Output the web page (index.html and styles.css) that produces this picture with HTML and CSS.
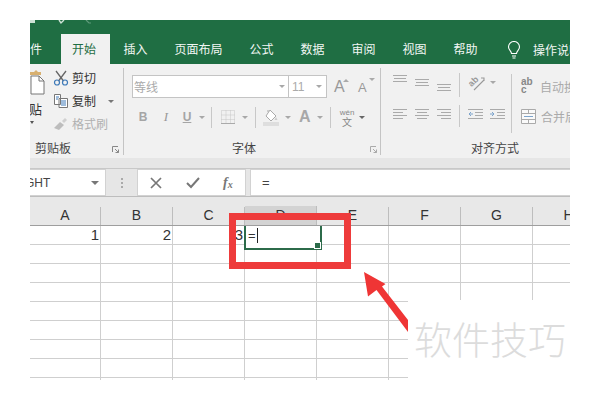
FILE: index.html
```html
<!DOCTYPE html>
<html lang="zh">
<head>
<meta charset="utf-8">
<title>Excel</title>
<link rel="stylesheet" href="styles.css">
</head>
<body>
<div class="page">
  <div class="app">
    <div class="titlebar">
      <svg class="qa" width="100" height="5" viewBox="0 0 100 5"><path d="M0 0h5v3H0z" fill="#cfe3d7"/><path d="M29 0l2 3 3-3" fill="none" stroke="#cfe3d7" stroke-width="1.4"/><path d="M56 0l3 3h2" fill="none" stroke="#5f9a7a" stroke-width="1.2"/></svg>
    </div>
    <div class="tabs">
      <span class="tab tab-file">文件</span>
      <span class="tab tab-active">开始</span>
      <span class="tab">插入</span>
      <span class="tab">页面布局</span>
      <span class="tab">公式</span>
      <span class="tab">数据</span>
      <span class="tab">审阅</span>
      <span class="tab">视图</span>
      <span class="tab">帮助</span>
      <svg class="bulb" width="14" height="18" viewBox="0 0 14 18"><path d="M4.500 12.500C4.500 10 1.500 9 1.500 6a5.500 5.500 0 0 1 11 0c0 3-3 4-3 6.500zM5 15h4M5.500 17h3" fill="none" stroke="#fff" stroke-width="1.100"/></svg>
      <span class="tell">操作说明搜索</span>
    </div>
    <div class="ribbon">
      <section class="group group-clip">
        <div class="group-body clip-body">
          <div class="paste">
            <svg width="15" height="30" viewBox="0 0 15 30"><path d="M0 4h4l2-2 2 2h3v3H0z" fill="#d8b070"/><path d="M1 8h8l5 5v13H1z" fill="#fff" stroke="#777"/><path d="M9 8v5h5" fill="none" stroke="#777"/></svg>
            <span class="paste-label">贴</span>
            <i class="caret caret-paste"></i>
          </div>
          <div class="clip-tools">
            <div class="tool">
              <svg width="16" height="16" viewBox="0 0 16 16"><path d="M3 1l7.500 10M13 1L5.500 11" fill="none" stroke="#666" stroke-width="1.300"/><circle cx="4" cy="12.500" r="2.500" fill="none" stroke="#3d79b8" stroke-width="1.200"/><circle cx="12" cy="12.500" r="2.500" fill="none" stroke="#3d79b8" stroke-width="1.200"/></svg>
              <span>剪切</span>
            </div>
            <div class="tool">
              <svg width="16" height="16" viewBox="0 0 16 16"><path d="M1.500 1.500h6v10h-6zM6 5.500h8.500v9H6z" fill="#fff" stroke="#777"/><path d="M8 8h5M8 10h5M8 12h5M3 4h3M3 6h2" stroke="#3d79b8"/></svg>
              <span>复制</span>
              <i class="caret caret-copy"></i>
            </div>
            <div class="tool tool-off">
              <svg width="16" height="16" viewBox="0 0 16 16"><path d="M1 12l6-6 4 3-5 5z" fill="#bdbdbd"/><path d="M9 5l3-3 2 2-3 3z" fill="#d0d0d0"/></svg>
              <span>格式刷</span>
            </div>
          </div>
        </div>
        <div class="group-foot foot-clip">
          <span>剪贴板</span>
          <svg class="launch" width="7" height="7" viewBox="0 0 7 7"><path d="M.5 6V.5H6M3 3l3.500 3.500M6.500 3.500v3h-3" fill="none" stroke="#888"/></svg>
        </div>
      </section>

      <section class="group group-font">
        <div class="group-body">
          <div class="font-row1">
            <div class="combo combo-name"><span>等线</span><i class="caret"></i></div>
            <div class="combo combo-size"><span>11</span><i class="caret"></i></div>
            <span class="grow-a">A<i class="tick"></i></span>
            <span class="shrink-a">A<i class="tick"></i></span>
          </div>
          <div class="font-row2">
            <b class="fmt fmt-b">B</b>
            <i class="fmt fmt-i">I</i>
            <span class="fmt fmt-u">U</span>
            <i class="caret caret-u"></i>
            <i class="vsep vsep-a"></i>
            <svg class="borders" width="14" height="14" viewBox="0 0 14 14"><path d="M.5.500h13v13H.500zM.5 5h13M.5 9.500h13M5 .5v13M9.500.5v13" fill="none" stroke="#c6c6c6" stroke-dasharray="1 1"/><path d="M0 13.500h14" stroke="#aaa"/></svg>
            <i class="caret caret-b"></i>
            <i class="vsep vsep-b"></i>
            <svg class="fill" width="16" height="17" viewBox="0 0 16 17"><path d="M7 1l6 6-5 5-5-5z" fill="#fff" stroke="#aaa"/><path d="M5 3V1" stroke="#aaa"/><path d="M13 8l1.500 3-3 0z" fill="#ccc"/><path d="M0 13h16v4H0z" fill="#dedede"/></svg>
            <i class="caret caret-f"></i>
            <span class="fmt-a">A</span>
            <i class="caret caret-a"></i>
            <i class="vsep vsep-c"></i>
            <span class="wen"><span>wén</span><span>文</span></span>
            <i class="caret caret-w"></i>
          </div>
        </div>
        <div class="group-foot foot-font">
          <span>字体</span>
          <svg class="launch" width="7" height="7" viewBox="0 0 7 7"><path d="M.5 6V.5H6M3 3l3.500 3.500M6.500 3.500v3h-3" fill="none" stroke="#aaa"/></svg>
        </div>
      </section>

      <section class="group group-align">
        <div class="group-body align-body">
          <div class="align-grid">
            <div class="align-row">
              <svg width="14" height="20" viewBox="0 0 14 20"><path d="M0 2.500h14M1 5.500h12M0 8.500h14" stroke="#aaa"/></svg>
              <svg width="14" height="20" viewBox="0 0 14 20"><path d="M0 6.500h14M1 9.500h12M0 12.500h14" stroke="#aaa"/></svg>
              <svg width="14" height="20" viewBox="0 0 14 20"><path d="M0 11.500h14M1 14.500h12M0 17.500h14" stroke="#aaa"/></svg>
              <i class="vsep vsep-d"></i>
              <svg class="orient" width="17" height="18" viewBox="0 0 17 18"><text x="1" y="12" transform="rotate(-45 5 10)" class="orient-text">ab</text><path d="M6 17L16 7M13 5l3 0 0 3" fill="none" stroke="#999" stroke-width="1.100"/></svg>
              <i class="caret caret-o"></i>
            </div>
            <div class="align-row align-row2">
              <svg width="14" height="14" viewBox="0 0 14 14"><path d="M0 1.500h14M0 4.500h10M0 7.500h14M0 10.500h10" stroke="#aaa"/></svg>
              <svg width="14" height="14" viewBox="0 0 14 14"><path d="M0 1.500h14M2 4.500h10M0 7.500h14M2 10.500h10" stroke="#aaa"/></svg>
              <svg width="14" height="14" viewBox="0 0 14 14"><path d="M0 1.500h14M4 4.500h10M0 7.500h14M4 10.500h10" stroke="#aaa"/></svg>
              <i class="vsep vsep-e"></i>
              <svg class="ind1" width="15" height="14" viewBox="0 0 15 14"><path d="M0 1.500h15M7 4.500h8M7 7.500h8M0 10.500h15" stroke="#aaa"/><path d="M5 6H1M3 4L1 6l2 2" fill="none" stroke="#7da4cc"/></svg>
              <svg class="ind2" width="15" height="14" viewBox="0 0 15 14"><path d="M0 1.500h15M7 4.500h8M7 7.500h8M0 10.500h15" stroke="#aaa"/><path d="M0 6h4M2 4l2 2-2 2" fill="none" stroke="#7da4cc"/></svg>
            </div>
          </div>
          <i class="vsep vsep-f"></i>
          <div class="wrap-col">
            <div class="wrap-row">
              <span class="abc"><span>ab</span><span>c</span></span>
              <span>自动换行</span>
            </div>
            <div class="wrap-row">
              <svg width="15" height="15" viewBox="0 0 15 15"><path d="M.5.500h14v14H.500zM.5 4.500h14M.5 10.500h14M7.500.5v4M7.500 10.500v4" fill="#fafafa" stroke="#aaa"/><path d="M3 7.500h9" stroke="#7da4cc"/></svg>
              <span>合并后居中</span>
            </div>
          </div>
        </div>
        <div class="group-foot foot-align"><span>对齐方式</span></div>
      </section>
    </div>

    <div class="strip"></div>

    <div class="formula-bar">
      <div class="name-box"><span>GHT</span><i class="caret caret-name"></i></div>
      <div class="dots"></div>
      <div class="fn-box">
        <svg width="12" height="12" viewBox="0 0 12 12"><path d="M1 1l10 10M11 1L1 11" stroke="#777" stroke-width="1.700"/></svg>
        <svg width="14" height="12" viewBox="0 0 14 12"><path d="M1 6l4 4 8-9" fill="none" stroke="#777" stroke-width="2"/></svg>
        <span class="fx">f<sub>x</sub></span>
      </div>
      <div class="input-box">=</div>
    </div>

    <div class="col-heads">
      <span>A</span><span>B</span><span>C</span><span class="col-on">D</span><span>E</span><span>F</span><span>G</span><span>H</span>
    </div>
    <div class="cells">
      <div class="num">1</div><div class="num">2</div><div class="num">3</div>
      <div class="sel"><span class="sel-text">=</span><i class="cursor"></i></div>
      <div></div><div></div><div></div><div></div>
      <div></div><div></div><div></div><div></div><div></div><div></div><div></div><div></div>
      <div></div><div></div><div></div><div></div><div></div><div></div><div></div><div></div>
      <div></div><div></div><div></div><div></div><div></div><div></div><div></div><div></div>
      <div></div><div></div><div></div><div></div><div></div><div></div><div></div><div></div>
      <div></div><div></div><div></div><div></div><div></div><div></div><div></div><div></div>
      <div></div><div></div><div></div><div></div><div></div><div></div><div></div><div></div>
      <div></div><div></div><div></div><div></div><div></div><div></div><div></div><div></div>
      <div></div><div></div><div></div><div></div><div></div><div></div><div></div><div></div>
    </div>
  </div>

  <div class="mark-box"></div>
  <div class="red-frame"></div>
  <svg class="arrow" width="50" height="64" viewBox="0 0 50 64"><path d="M0 0L21.500 12 18 14.500 44 48V60L12.500 18 4 24.500z" fill="#ef3535"/></svg>
  <div class="watermark">软件技巧</div>
</div>
</body>
</html>
```

FILE: styles.css
```css
* { box-sizing: border-box; }
html, body { margin: 0; background: #fff; }
body { font-family: "Noto Sans CJK SC", "Liberation Sans", sans-serif; }
.page { position: relative; width: 600px; height: 400px; overflow: hidden; background: #fff; }
.app { width: 540px; height: 360px; margin: 20px 0 0 30px; overflow: hidden; display: flex; flex-direction: column; }
i { display: block; font-style: normal; }

.titlebar { height: 14px; background: #1f6e43; flex: none; }
.qa { display: block; }

.tabs { height: 30px; flex: none; display: flex; align-items: center; background: #1f6e43; color: #f2f7f4; font-size: 12px; white-space: nowrap; }
.tab { padding: 0 13.5px; height: 30px; line-height: 29px; flex: none; }
.tab-file { width: 43px; padding: 0; margin-left: -12px; }
.tab-active { width: 49px; padding: 0 0 0 11px; background: #f1f1f1; color: #1f6e43; }
.bulb { margin: 1px 0 0 16px; flex: none; }
.tell { margin-left: 12px; }

.ribbon { height: 94px; flex: none; display: flex; background: #f1f1f1; color: #555; font-size: 12px; }
.group { position: relative; display: flex; flex-direction: column; flex: none; }
.group-clip, .group-font { border-right: 1px solid transparent; }
.group-clip::after, .group-font::after { content: ""; position: absolute; right: -1px; top: 4px; bottom: 3px; width: 1px; background: #c4c4c4; }
.group-clip { width: 94px; }
.group-font { width: 257px; }
.group-align { width: 189px; }
.group-body { height: 73px; flex: none; }
.group-foot { height: 21px; flex: none; display: flex; align-items: center; color: #444; font-size: 12px; line-height: 16px; }

.caret { width: 0; height: 0; border-left: 3px solid transparent; border-right: 3px solid transparent; border-top: 3px solid #a8a8a8; flex: none; }

.clip-body { display: flex; }
.paste { width: 23px; padding-top: 4px; flex: none; overflow: hidden; }
.paste svg { display: block; }
.paste-label { display: block; font-size: 13px; line-height: 16px; margin: 3px 0 0 -2px; color: #333; width: 14px; overflow: hidden; text-align: right; }
.caret-paste { margin: 4px 0 0 0; border-top-color: #555; border-left-width: 2px; border-right-width: 2px; }
.clip-tools { padding-top: 6px; display: flex; flex-direction: column; gap: 7px; }
.tool { display: flex; align-items: center; gap: 3px; height: 16px; color: #333; line-height: 16px; font-size: 12px; }
.tool-off { color: #b0b0b0; }
.caret-copy { margin-left: 9px; border-top-color: #777; }
.foot-clip { padding-left: 5px; position: relative; }
.foot-clip .launch { margin-left: 41px; margin-top: 4px; }

.font-row1 { display: flex; align-items: center; height: 23px; margin: 11px 0 0 8px; }
.combo { height: 23px; background: #fff; border: 1px solid #c4c4c4; display: flex; align-items: center; justify-content: space-between; color: #aaa; padding: 0 2px 0 1px; font-size: 12px; }
.combo-name { width: 157px; padding-right: 3px; }
.combo-size { width: 39px; margin-left: -1px; padding: 0 4px 0 3px; font-family: "Liberation Sans", sans-serif; }
.grow-a, .shrink-a { position: relative; display: block; font-family: "Liberation Sans", sans-serif; color: #999; line-height: 20px; }
.grow-a { font-size: 16px; margin-left: 7px; width: 15px; }
.shrink-a { font-size: 13px; margin-left: 9px; margin-top: 2px; width: 15px; }
.tick { position: absolute; right: 0; top: 2px; width: 0; height: 0; border-left: 3px solid transparent; border-right: 3px solid transparent; border-bottom: 3px solid #aaa; }
.shrink-a .tick { border-bottom: 0; border-top: 3px solid #aaa; right: -2px; top: 0; }

.font-row2 { display: flex; align-items: center; height: 24px; margin: 7px 0 0 14px; font-family: "Liberation Sans", sans-serif; color: #aaa; }
.fmt { display: block; font-size: 12px; width: 10px; text-align: center; }
.fmt-b { color: #a5a5a5; }
.fmt-i { margin-left: 13px; font-family: "Liberation Serif", serif; font-style: italic; font-size: 13px; color: #999; }
.fmt-u { margin-left: 11px; text-decoration: underline; font-weight: 700; color: #a5a5a5; }
.caret-u { margin-left: 7px; }
.vsep { width: 1px; background: #c8c8c8; flex: none; }
.vsep-a { height: 21px; margin-left: 6px; }
.borders { margin-left: 9px; flex: none; }
.caret-b { margin-left: 7px; }
.vsep-b { height: 21px; margin-left: 7px; }
.fill { margin-left: 7px; flex: none; }
.caret-f { margin-left: 6px; }
.fmt-a { margin-left: 8px; font-size: 16px; font-weight: 700; color: #a8a8a8; width: 11px; }
.caret-a { margin-left: 7px; }
.vsep-c { height: 21px; margin-left: 7px; }
.wen { margin-left: 8px; width: 16px; display: flex; flex-direction: column; align-items: center; font-size: 8px; line-height: 8px; color: #888; }
.wen span:last-child { font-family: "Noto Sans CJK SC", sans-serif; font-size: 10px; line-height: 9px; }
.caret-w { margin-left: 4px; border-top-color: #666; }
.foot-font { padding-left: 108px; }
.foot-font .launch { margin-left: 114px; margin-top: 4px; }

.align-body { display: flex; padding: 9px 0 0 12px; }
.align-grid { width: 118px; flex: none; }
.align-row { display: flex; height: 26px; gap: 8px; align-items: flex-start; }
.align-row svg { flex: none; }
.vsep-d { height: 24px; }
.orient-text { font-family: "Liberation Sans", sans-serif; font-size: 9px; font-weight: 700; fill: #999; }
.caret-o { margin: 8px 0 0 -3px; }
.align-row2 { height: 24px; margin-top: 9px; }
.vsep-e { height: 22px; margin-top: -3px; }
.ind2 { margin-left: -1px; }
.vsep-f { height: 59px; margin-top: 1px; flex: none; }
.wrap-col { padding: 4px 0 0 9px; display: flex; flex-direction: column; gap: 12px; white-space: nowrap; color: #aaa; font-size: 12px; }
.wrap-row { display: flex; align-items: center; gap: 5px; height: 18px; }
.wrap-row svg { flex: none; }
.abc { width: 14px; flex: none; display: flex; flex-direction: column; align-items: flex-start; font-family: "Liberation Sans", sans-serif; font-size: 10px; font-weight: 700; line-height: 8px; color: #888; }
.foot-align { padding-left: 90px; }

.strip { height: 11px; flex: none; background: #e6e6e6; border-bottom: 1px solid #c8c8c8; }

.formula-bar { height: 28px; flex: none; display: flex; background: #e6e6e6; border-bottom: 1px solid #bdbdbd; }
.name-box { width: 76px; height: 27px; background: #fff; border: 1px solid #d2d2d2; border-left: 0; display: flex; align-items: center; justify-content: space-between; padding-right: 6px; font-family: "Liberation Sans", sans-serif; font-size: 12px; color: #444; overflow: hidden; }
.name-box span { margin-left: -5px; }
.caret-name { border-left-width: 4px; border-right-width: 4px; border-top-width: 4px; border-top-color: #777; }
.dots { width: 31px; flex: none; position: relative; }
.dots::after { content: ""; position: absolute; left: 15px; top: 9px; width: 2px; height: 10px; background: repeating-linear-gradient(#aaa 0 2px, transparent 2px 4px); }
.fn-box { width: 109px; height: 27px; background: #fff; border: 1px solid #d2d2d2; display: flex; align-items: center; padding-left: 12px; flex: none; }
.fn-box svg:nth-child(2) { margin-left: 24px; }
.fx { margin-left: 23px; font-family: "Liberation Serif", serif; font-style: italic; font-weight: 700; font-size: 14px; color: #777; line-height: 14px; }
.fx sub { font-size: 10px; vertical-align: -1px; line-height: 0; }
.input-box { width: 320px; height: 27px; margin-left: 4px; background: #fff; border: 1px solid #d2d2d2; border-right: 0; padding-left: 11px; font-family: "Liberation Sans", sans-serif; font-size: 13px; line-height: 25px; color: #444; flex: none; }

.col-heads, .cells { display: grid; grid-template-columns: 71px repeat(7, 72px); flex: none; font-family: "Liberation Sans", sans-serif; color: #333; }
.col-heads { height: 29px; background: #e8e8e8; border-bottom: 1px solid #9e9e9e; font-size: 14px; }
.col-heads span { margin-top: 10px; height: 18px; text-align: center; line-height: 17px; border-right: 1px solid #bdbdbd; }
.col-heads .col-on { background: #d3d3d3; margin-top: 9px; height: 19px; line-height: 19px; }

.cells { grid-auto-rows: 19px; height: 154px; overflow: hidden; font-size: 15px; }
.cells div { border-right: 1px solid #cfcfcf; border-bottom: 1px solid #cfcfcf; }
.cells .num { text-align: right; padding-right: 1px; line-height: 18px; }
.cells .sel { position: relative; border: 0; display: flex; align-items: center; padding-left: 3px; z-index: 1; overflow: visible; }
.sel::before { content: ""; position: absolute; left: -1px; top: -2px; width: 74px; height: 22px; border: 2px solid #2c6b4a; }
.sel::after { content: ""; position: absolute; left: 69px; top: 16px; width: 5px; height: 5px; background: #2c6b4a; border: 1px solid #fff; }
.sel-text { font-size: 13px; color: #333; }
.cursor { width: 1px; height: 15px; background: #222; margin-left: 1px; }

.mark-box { position: absolute; left: 408px; top: 300px; width: 162px; height: 81px; background: #fff; }
.red-frame { position: absolute; left: 229px; top: 213px; width: 122px; height: 56px; border: 7px solid #ee3b3b; }
.arrow { position: absolute; left: 364px; top: 272px; }
.watermark { position: absolute; left: 414px; top: 313px; font-size: 38px; font-weight: 300; line-height: 50px; color: #dcdcdc; white-space: nowrap; }
```
